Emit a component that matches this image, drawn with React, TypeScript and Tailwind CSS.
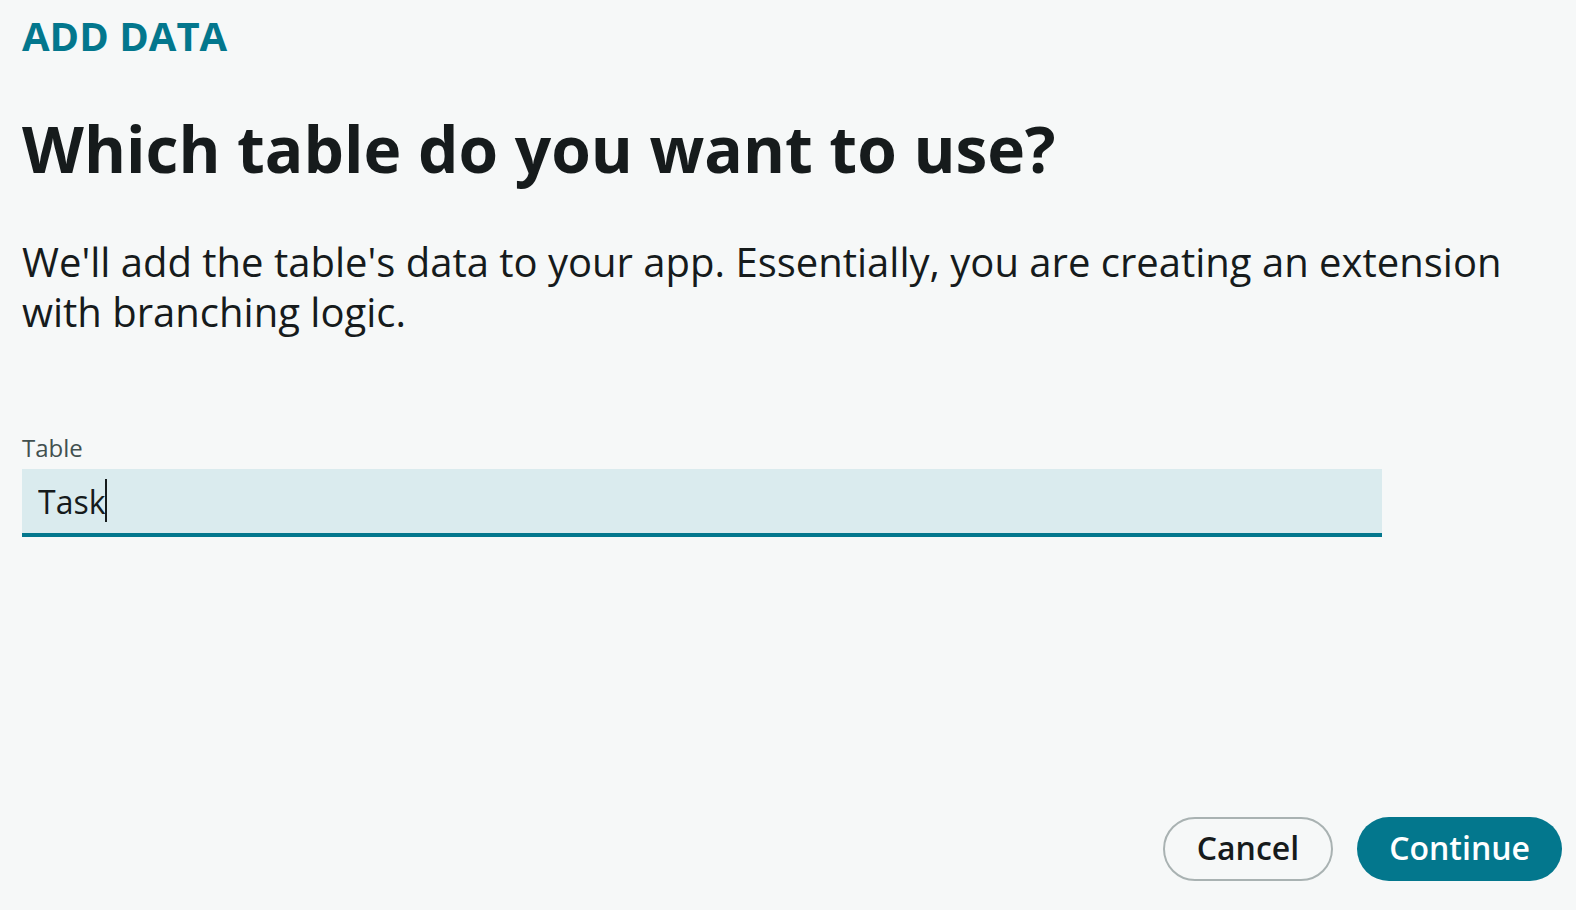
import React, { useLayoutEffect, useRef, useState } from "react";

export default function App() {
  const [table, setTable] = useState("Task");
  const [textWidth, setTextWidth] = useState(0);
  const inputRef = useRef<HTMLInputElement>(null);

  // Keep the drawn caret at the end of the typed text.
  useLayoutEffect(() => {
    const context = document.createElement("canvas").getContext("2d");
    if (!context || !inputRef.current) return;
    context.font = getComputedStyle(inputRef.current).font;
    setTextWidth(Math.floor(context.measureText(table).width));
  }, [table]);

  return (
    <main className="flex min-h-screen flex-col bg-[#f6f8f8] pt-2 pr-3.5 pb-[29px] pl-[22px] font-['Open_Sans',sans-serif] text-[#161b1c]">
      <p className="text-[40px] leading-[56px] font-bold text-[#03778d]">ADD DATA</p>
      <h1 className="mt-[45px] text-[64px] leading-[80px] font-bold">Which table do you want to use?</h1>
      <p className="mt-12 text-[40px] leading-[50px]">
        We'll add the table's data to your app. Essentially, you are creating an extension with branching logic.
      </p>
      <form className="mt-[94px] flex grow flex-col" onSubmit={(e) => e.preventDefault()}>
        <label htmlFor="table" className="text-2xl leading-[34px] text-[#42504f]">Table</label>
        <div className="relative mt-1 mr-[180px]">
          <input
            ref={inputRef}
            id="table"
            type="text"
            autoFocus
            autoComplete="off"
            value={table}
            onChange={(e) => setTable(e.target.value)}
            className="block h-[68px] w-full border-b-4 border-[#03778d] bg-[#daebee] px-4 text-[32px] caret-transparent outline-none"
          />
          <span
            aria-hidden="true"
            className="pointer-events-none absolute top-2.5 left-4 h-[43px] w-0.5 bg-[#161b1c]"
            style={{ marginLeft: textWidth }}
          />
        </div>
        <div className="mt-auto flex justify-end gap-6">
          <button type="button" className="h-16 rounded-full border-2 border-[#a9b2b2] px-8 pb-0.5 text-[32px] leading-none font-semibold">Cancel</button>
          <button type="submit" className="h-16 rounded-full bg-[#03778d] px-8 pb-0.5 text-[32px] leading-none font-semibold text-white">Continue</button>
        </div>
      </form>
    </main>
  );
}
